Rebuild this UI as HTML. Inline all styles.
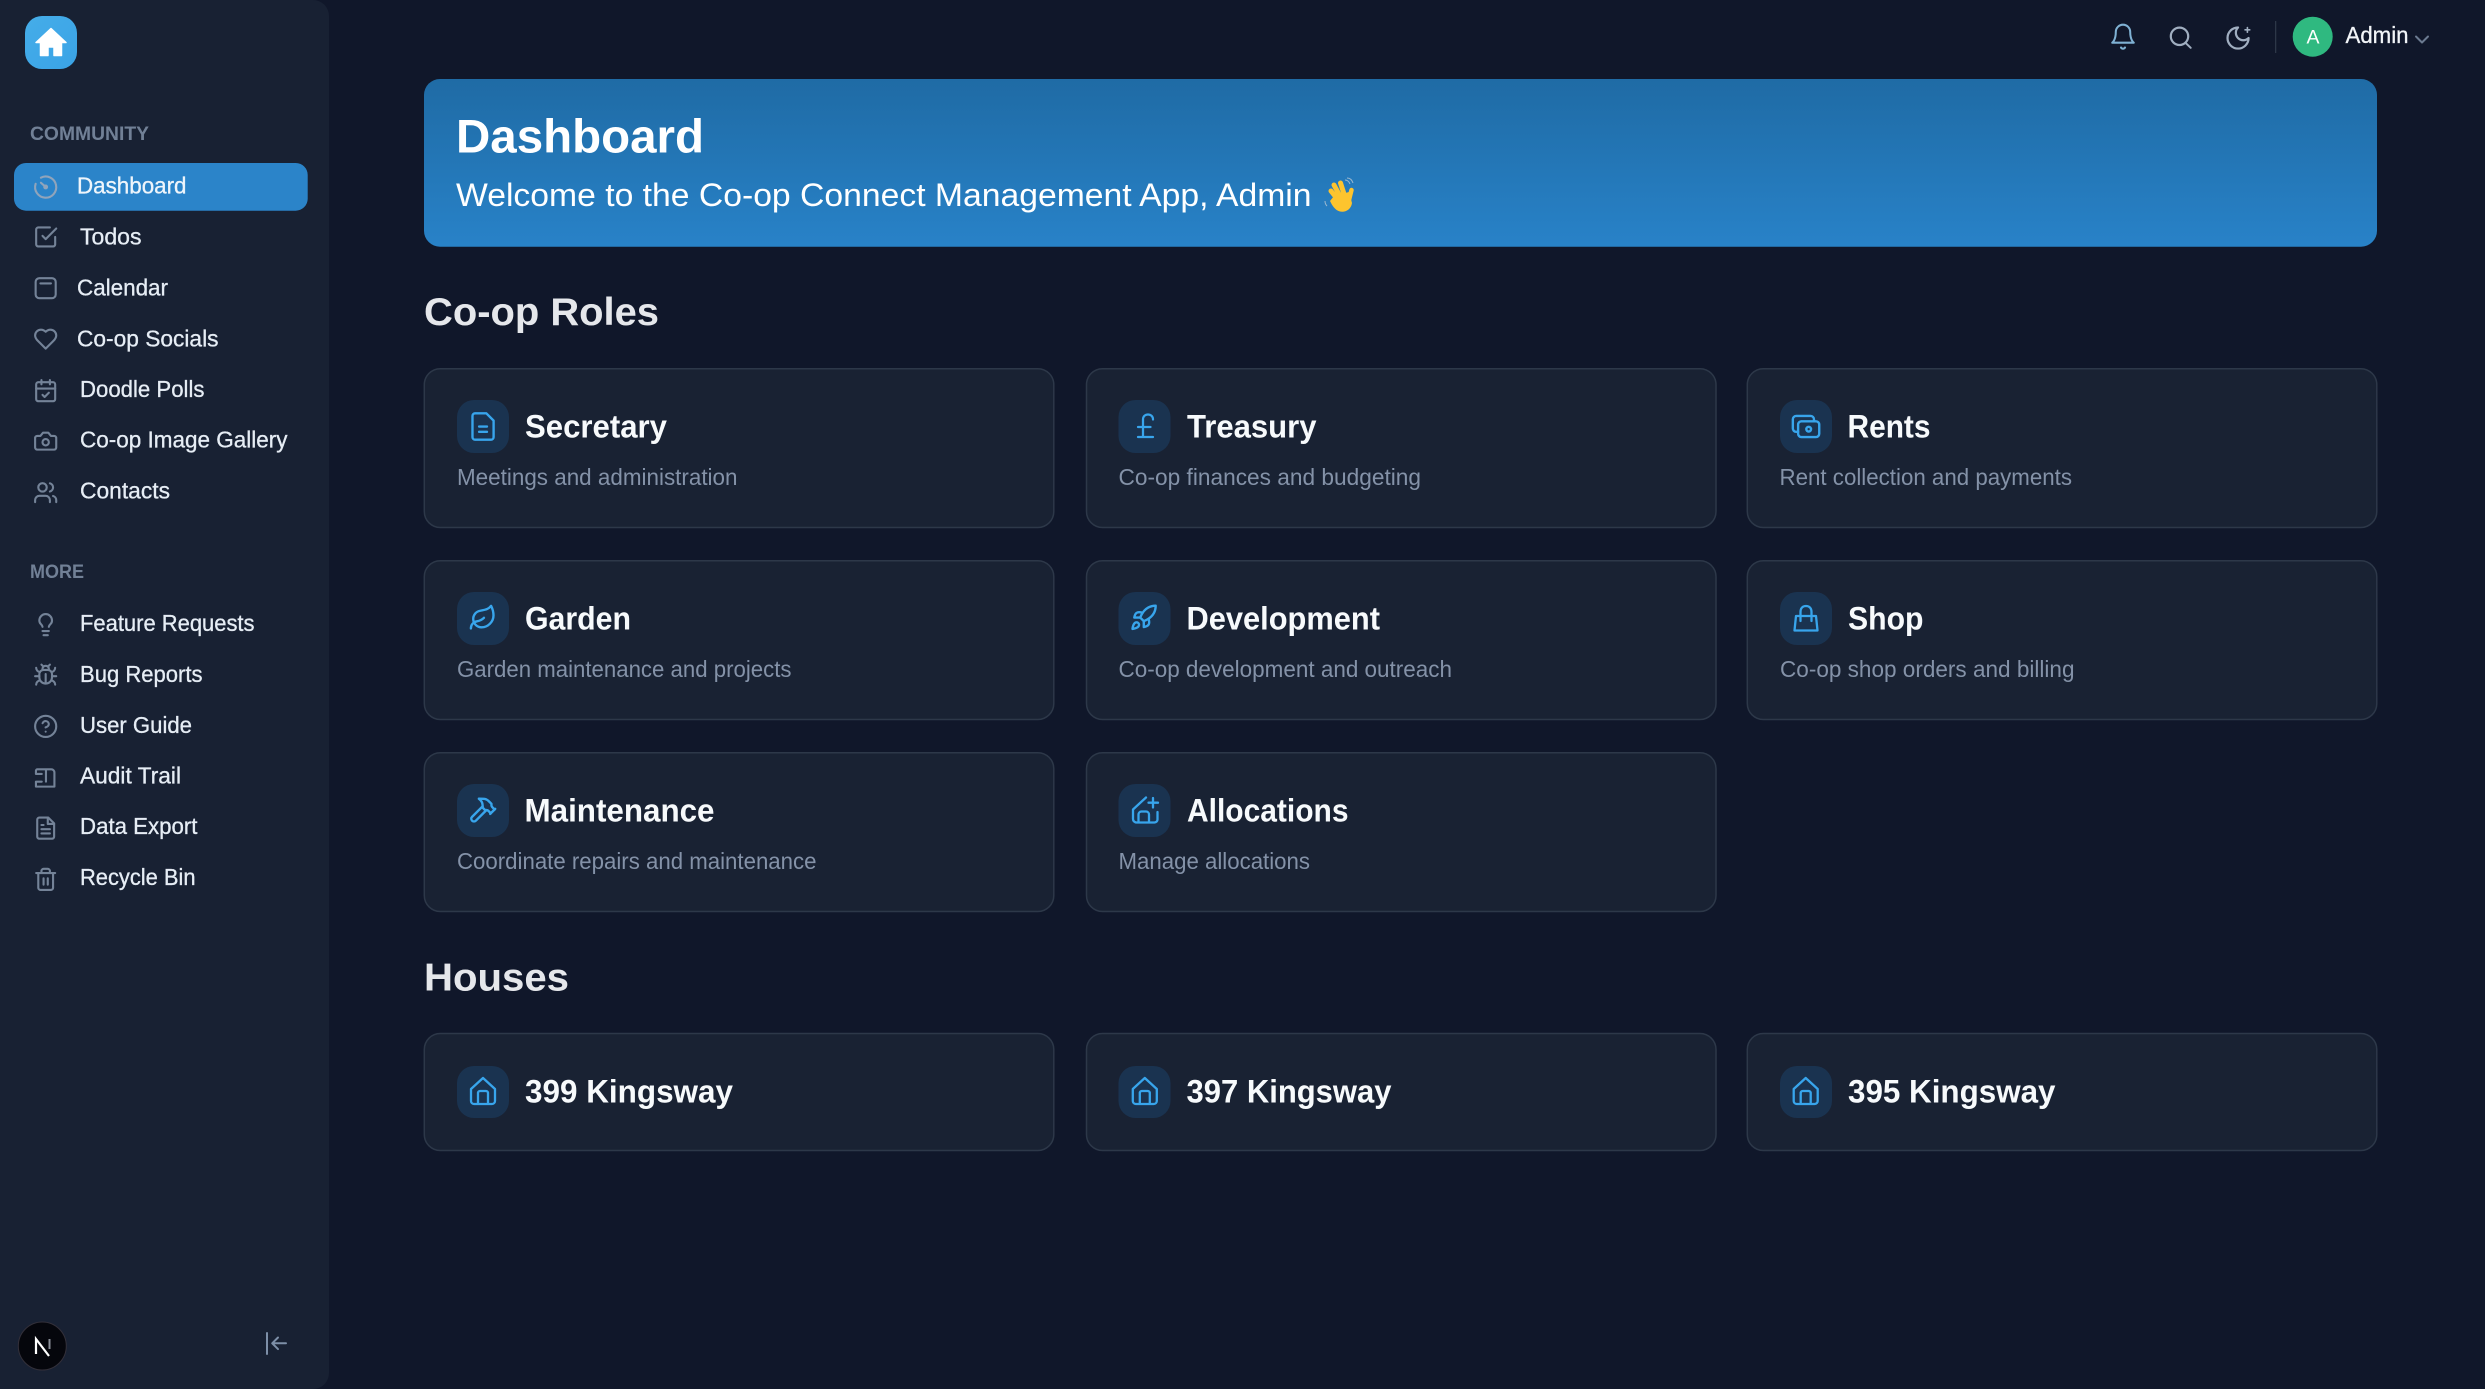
<!DOCTYPE html>
<html lang="en"><head><meta charset="utf-8"><title>Dashboard</title>
<style>
html,body{margin:0;padding:0;background:#10172a;width:2485px;height:1389px;overflow:hidden}
svg{display:block}
text{font-family:"Liberation Sans",Arial,sans-serif}
.n{font-size:23px;fill:#e6edf5;stroke:#e6edf5;stroke-width:.3}
.s{font-size:19px;font-weight:700;fill:#718096}
.t{font-size:32px;font-weight:700;fill:#f7fafc}
.d{font-size:23px;fill:#8492a8}
.h{font-size:39px;font-weight:700;fill:#e5e7eb}
.i{fill:none;stroke:#748398;stroke-width:2;stroke-linecap:round;stroke-linejoin:round}
.c{fill:none;stroke:#38a5ec;stroke-width:1.8;stroke-linecap:round;stroke-linejoin:round}
.card{fill:#192233;stroke:#2d3849;stroke-width:1.5}
.box{fill:#1a3350}
</style></head><body>
<svg xmlns="http://www.w3.org/2000/svg" width="2485" height="1389" viewBox="0 0 2485 1389">
<defs>
<linearGradient id="g" x1="0" y1="0" x2="0" y2="1"><stop offset="0" stop-color="#1f6ba5"/><stop offset="1" stop-color="#2882c8"/></linearGradient>
<linearGradient id="lg" x1="0" y1="0" x2="1" y2="1"><stop offset="0" stop-color="#45ade9"/><stop offset="1" stop-color="#3aa3e6"/></linearGradient>
</defs>
<rect width="2485" height="1389" fill="#10172a"/>

<!-- sidebar -->
<path d="M0 0H313a16 16 0 0 1 16 16V1373a16 16 0 0 1-16 16H0Z" fill="#182133"/>
<rect x="25" y="16" width="52" height="53" rx="17" fill="url(#lg)"/>
<path d="M51 28.500 36 42.500h4.500V55.500h7.500V47h6v8.500h7.500V42.500H66Z" fill="#fff" stroke="#fff" stroke-width="1.500" stroke-linejoin="round"/>

<text class="s" x="30" y="140" textLength="119" lengthAdjust="spacingAndGlyphs">COMMUNITY</text>
<rect x="14" y="163" width="293.700" height="47.700" rx="12" fill="#2b84c9"/>

<text class="n" x="77" y="193.300" textLength="109.500" lengthAdjust="spacingAndGlyphs" style="fill:#eef5fb;stroke:#eef5fb">Dashboard</text>
<text class="n" x="80" y="244.300" textLength="61.500" lengthAdjust="spacingAndGlyphs">Todos</text>
<text class="n" x="77" y="295.500" textLength="91" lengthAdjust="spacingAndGlyphs">Calendar</text>
<text class="n" x="77" y="346.300" textLength="141.500" lengthAdjust="spacingAndGlyphs">Co-op Socials</text>
<text class="n" x="80" y="397" textLength="124.500" lengthAdjust="spacingAndGlyphs">Doodle Polls</text>
<text class="n" x="80" y="447.700" textLength="207.500" lengthAdjust="spacingAndGlyphs">Co-op Image Gallery</text>
<text class="n" x="80" y="498.300" textLength="90" lengthAdjust="spacingAndGlyphs">Contacts</text>

<text class="s" x="30" y="578" textLength="54" lengthAdjust="spacingAndGlyphs">MORE</text>
<text class="n" x="80" y="631" textLength="174.500" lengthAdjust="spacingAndGlyphs">Feature Requests</text>
<text class="n" x="80" y="682" textLength="122.500" lengthAdjust="spacingAndGlyphs">Bug Reports</text>
<text class="n" x="80" y="733" textLength="112" lengthAdjust="spacingAndGlyphs">User Guide</text>
<text class="n" x="80" y="783.300" textLength="101" lengthAdjust="spacingAndGlyphs">Audit Trail</text>
<text class="n" x="80" y="834" textLength="117.500" lengthAdjust="spacingAndGlyphs">Data Export</text>
<text class="n" x="80" y="885" textLength="115.500" lengthAdjust="spacingAndGlyphs">Recycle Bin</text>

<!-- sidebar icons -->
<g transform="translate(33,174.300) scale(1.056)" class="i" style="stroke:#90a4bb"><path d="M7.500 3.200A10 10 0 1 1 2.500 9"/><path d="M12 12 7.500 8"/><circle cx="12" cy="12" r="1.300" fill="#90a4bb"/></g>
<g transform="translate(33,224.300) scale(1.056)" class="i"><path d="m9 11 3 3L22 4"/><path d="M21 12v7a2 2 0 0 1-2 2H5a2 2 0 0 1-2-2V5a2 2 0 0 1 2-2h11"/></g>
<g transform="translate(33,275.500) scale(1.056)" class="i"><rect x="2.500" y="2.500" width="19" height="19" rx="3.500"/><path d="M7 7.500h10"/></g>
<g transform="translate(33,326.500) scale(1.056)" class="i"><path d="M19 14c1.490-1.460 3-3.210 3-5.500A5.500 5.500 0 0 0 16.500 3c-1.760 0-3 .5-4.500 2-1.500-1.500-2.740-2-4.500-2A5.500 5.500 0 0 0 2 8.500c0 2.300 1.500 4.050 3 5.500l7 7Z"/></g>
<g transform="translate(33,378) scale(1.056)" class="i"><path d="M8 2v4M16 2v4"/><rect x="3" y="4" width="18" height="18" rx="2"/><path d="M3 10h18M9 16l2 2 4-4"/></g>
<g transform="translate(33,428.500) scale(1.056)" class="i"><path d="M14.500 4h-5L7 7H4a2 2 0 0 0-2 2v9a2 2 0 0 0 2 2h16a2 2 0 0 0 2-2V9a2 2 0 0 0-2-2h-3l-2.500-3z"/><circle cx="12" cy="13" r="3"/></g>
<g transform="translate(33,480) scale(1.056)" class="i"><path d="M16 21v-2a4 4 0 0 0-4-4H6a4 4 0 0 0-4 4v2"/><circle cx="9" cy="7" r="4"/><path d="M22 21v-2a4 4 0 0 0-3-3.870"/><path d="M16 3.130a4 4 0 0 1 0 7.750"/></g>
<g transform="translate(33,612) scale(1.056)" class="i"><path d="M15 14c.2-1 .7-1.700 1.500-2.500 1-.9 1.500-2.200 1.500-3.500A6 6 0 0 0 6 8c0 1 .2 2.200 1.500 3.500.7.7 1.300 1.500 1.500 2.500"/><path d="M9 18h6M10 22h4"/></g>
<g transform="translate(33,662.500) scale(1.056)" class="i"><path d="m8 2 1.880 1.880M14.120 3.880 16 2M9 7.130v-1a3 3 0 1 1 6 0v1"/><path d="M12 20c-3.300 0-6-2.700-6-6v-3a4 4 0 0 1 4-4h4a4 4 0 0 1 4 4v3c0 3.300-2.700 6-6 6"/><path d="M12 20v-9M6.530 9C4.600 8.800 3 7.100 3 5M6 13H2M3 21c0-2.100 1.700-3.900 3.800-4M20.970 5c0 2.100-1.600 3.800-3.500 4M22 13h-4M17.200 17c2.100.1 3.800 1.900 3.800 4"/></g>
<g transform="translate(33,713.700) scale(1.056)" class="i"><circle cx="12" cy="12" r="10"/><path d="M9.090 9a3 3 0 0 1 5.830 1c0 2-3 3-3 3M12 17h.01"/></g>
<g transform="translate(33.300,765.500) scale(1.056)" class="i"><path d="M2.500 8V5a1.400 1.400 0 0 1 1.400-1.400H17a3 3 0 0 1 3 3V20H2.500v-4.700H8M2.500 8H8M12 3.600v11.700"/></g>
<g transform="translate(33,815.500) scale(1.056)" class="i"><path d="M14.500 2H6a2 2 0 0 0-2 2v16a2 2 0 0 0 2 2h12a2 2 0 0 0 2-2V7.500L14.500 2z"/><path d="M14 2v6h6M16 13H8M16 17H8M10 9H8"/></g>
<g transform="translate(33,866.700) scale(1.056)" class="i"><path d="M3 6h18M19 6v14c0 1-1 2-2 2H7c-1 0-2-1-2-2V6M8 6V4c0-1 1-2 2-2h4c1 0 2 1 2 2v2M10 11v6M14 11v6"/></g>

<!-- bottom of sidebar -->
<circle cx="42.300" cy="1346" r="24" fill="#05060c" stroke="#33303a" stroke-width="1"/>
<path d="M36 1354v-15l13 17" fill="none" stroke="#fff" stroke-width="2.200"/>
<path d="M49.500 1339v10" fill="none" stroke="#8a8f99" stroke-width="2"/>
<path d="M267 1333v21M272.500 1343.300H286M278 1337.500l-5.800 5.800 5.800 5.800" fill="none" stroke="#7d8fa8" stroke-width="2" stroke-linecap="round" stroke-linejoin="round"/>

<!-- top bar -->
<g transform="translate(2108.600,22.300) scale(1.2)" fill="none" stroke="#7fb1d3" stroke-width="1.700" stroke-linecap="round" stroke-linejoin="round"><path d="M6 8a6 6 0 0 1 12 0c0 7 3 9 3 9H3s3-2 3-9"/><path d="M10.300 21a1.940 1.940 0 0 0 3.400 0"/></g>
<circle cx="2179.500" cy="36.300" r="8.700" fill="none" stroke="#a0aec0" stroke-width="2.200"/>
<path d="M2186 43.300l4.700 4.500" stroke="#a0aec0" stroke-width="2" stroke-linecap="round"/>
<g transform="translate(2224,24) scale(1.170)" fill="none" stroke="#a0aec0" stroke-width="1.900" stroke-linecap="round" stroke-linejoin="round"><path d="M12 3a6 6 0 0 0 9 9 9 9 0 1 1-9-9Z"/><path d="M20 3v4M22 5h-4" stroke-width="1.400"/></g>
<rect x="2275" y="21" width="1.300" height="32" fill="#2d3748"/>
<circle cx="2312.700" cy="36.700" r="20" fill="#2fb980"/>
<text x="2306.500" y="43.500" font-size="19" fill="#fff" textLength="13" lengthAdjust="spacingAndGlyphs">A</text>
<text class="n" x="2345.500" y="43" textLength="63" lengthAdjust="spacingAndGlyphs" style="fill:#f2f5f8;stroke:#f2f5f8">Admin</text>
<path d="M2416 36.500l6 6 6-6" fill="none" stroke="#6b7a90" stroke-width="2" stroke-linecap="round" stroke-linejoin="round"/>

<!-- banner -->
<rect x="424" y="79" width="1953" height="167.700" rx="16" fill="url(#g)"/>
<text x="456" y="152.700" font-size="47.500" font-weight="700" fill="#fff" textLength="248" lengthAdjust="spacingAndGlyphs">Dashboard</text>
<text x="456" y="206" font-size="32" fill="#fff" textLength="855.500" lengthAdjust="spacingAndGlyphs">Welcome to the Co-op Connect Management App, Admin</text>
<g stroke="#fdc42e" stroke-width="5" stroke-linecap="round" fill="none">
<path d="M1339 201 1331 191M1341 198 1334 185M1345 197 1340.500 183"/>
<path d="M1349 200 1351.500 190" stroke-width="4.500"/>
</g>
<path d="M1334 196 1349 192 1352 203C1351 210 1345 212.500 1340 211.500 1335 210.500 1332 205 1330 201Z" fill="#fdc42e"/>
<path d="M1345 180c2 0 4 1.500 5 4M1347 178c3 0 5 2 6 5M1325 201c0 2 1 4 2 5" fill="none" stroke="#9db9d0" stroke-width="1"/>

<!-- section heads -->
<text class="h" x="424" y="325" textLength="235" lengthAdjust="spacingAndGlyphs">Co-op Roles</text>
<text class="h" x="424" y="990.700" textLength="145" lengthAdjust="spacingAndGlyphs">Houses</text>

<!-- cards -->
<rect class="card" x="424.300" y="368.700" width="629.500" height="158.800" rx="16"/>
<rect class="card" x="1086.500" y="368.700" width="629.500" height="158.800" rx="16"/>
<rect class="card" x="1747.300" y="368.700" width="629.500" height="158.800" rx="16"/>
<rect class="card" x="424.300" y="560.700" width="629.500" height="158.800" rx="16"/>
<rect class="card" x="1086.500" y="560.700" width="629.500" height="158.800" rx="16"/>
<rect class="card" x="1747.300" y="560.700" width="629.500" height="158.800" rx="16"/>
<rect class="card" x="424.300" y="752.700" width="629.500" height="158.800" rx="16"/>
<rect class="card" x="1086.500" y="752.700" width="629.500" height="158.800" rx="16"/>
<rect class="card" x="424.300" y="1033.500" width="629.500" height="117" rx="16"/>
<rect class="card" x="1086.500" y="1033.500" width="629.500" height="117" rx="16"/>
<rect class="card" x="1747.300" y="1033.500" width="629.500" height="117" rx="16"/>

<rect class="box" x="457" y="400" width="52" height="53" rx="17"/>
<rect class="box" x="1118.500" y="400" width="52" height="53" rx="17"/>
<rect class="box" x="1780" y="400" width="52" height="53" rx="17"/>
<rect class="box" x="457" y="592" width="52" height="53" rx="17"/>
<rect class="box" x="1118.500" y="592" width="52" height="53" rx="17"/>
<rect class="box" x="1780" y="592" width="52" height="53" rx="17"/>
<rect class="box" x="457" y="784" width="52" height="53" rx="17"/>
<rect class="box" x="1118.500" y="784" width="52" height="53" rx="17"/>
<rect class="box" x="457" y="1066" width="52" height="52" rx="17"/>
<rect class="box" x="1118.500" y="1066" width="52" height="52" rx="17"/>
<rect class="box" x="1780" y="1066" width="52" height="52" rx="17"/>

<text class="t" x="525" y="437.300" textLength="142" lengthAdjust="spacingAndGlyphs">Secretary</text>
<text class="t" x="1187" y="437.300" textLength="129.500" lengthAdjust="spacingAndGlyphs">Treasury</text>
<text class="t" x="1847.500" y="437.300" textLength="83" lengthAdjust="spacingAndGlyphs">Rents</text>
<text class="t" x="525" y="629.300" textLength="106" lengthAdjust="spacingAndGlyphs">Garden</text>
<text class="t" x="1186.500" y="629.300" textLength="193.500" lengthAdjust="spacingAndGlyphs">Development</text>
<text class="t" x="1848" y="629.300" textLength="75.500" lengthAdjust="spacingAndGlyphs">Shop</text>
<text class="t" x="524.500" y="821.500" textLength="190" lengthAdjust="spacingAndGlyphs">Maintenance</text>
<text class="t" x="1187" y="821.500" textLength="161.500" lengthAdjust="spacingAndGlyphs">Allocations</text>
<text class="t" x="525" y="1102.700" textLength="208" lengthAdjust="spacingAndGlyphs">399 Kingsway</text>
<text class="t" x="1186.500" y="1102.700" textLength="205" lengthAdjust="spacingAndGlyphs">397 Kingsway</text>
<text class="t" x="1848" y="1102.700" textLength="207.500" lengthAdjust="spacingAndGlyphs">395 Kingsway</text>

<text class="d" x="457" y="485" textLength="280.500" lengthAdjust="spacingAndGlyphs">Meetings and administration</text>
<text class="d" x="1118.500" y="485" textLength="302.500" lengthAdjust="spacingAndGlyphs">Co-op finances and budgeting</text>
<text class="d" x="1779.500" y="485" textLength="292.500" lengthAdjust="spacingAndGlyphs">Rent collection and payments</text>
<text class="d" x="457" y="677" textLength="334.500" lengthAdjust="spacingAndGlyphs">Garden maintenance and projects</text>
<text class="d" x="1118.500" y="677" textLength="333.500" lengthAdjust="spacingAndGlyphs">Co-op development and outreach</text>
<text class="d" x="1780" y="677" textLength="294.500" lengthAdjust="spacingAndGlyphs">Co-op shop orders and billing</text>
<text class="d" x="457" y="869" textLength="359.500" lengthAdjust="spacingAndGlyphs">Coordinate repairs and maintenance</text>
<text class="d" x="1118.500" y="869" textLength="191.500" lengthAdjust="spacingAndGlyphs">Manage allocations</text>

<!-- card icons -->
<g transform="translate(467.200,410.700) scale(1.320)" class="c"><path d="M14.500 2H6a2 2 0 0 0-2 2v16a2 2 0 0 0 2 2h12a2 2 0 0 0 2-2V7.500L14.500 2z"/><path d="M9 12h6M9 16h6"/></g>
<g transform="translate(1130.500,410.700) scale(1.250)" class="c"><path d="M18 7c0-5.333-8-5.333-8 0M10 7v14M6 21h12M6 13h10"/></g>
<g transform="translate(1790.200,410.700) scale(1.320)" class="c"><rect x="6" y="8" width="16" height="12" rx="2.500"/><circle cx="14" cy="14" r="1.800"/><path d="M18 8V6.500A2.500 2.500 0 0 0 15.500 4h-11A2.500 2.500 0 0 0 2 6.500v7A2.500 2.500 0 0 0 4.500 16H6"/></g>
<g transform="translate(468.500,603.500) scale(1.190)" class="c" style="stroke-width:2"><path d="M11 20A7 7 0 0 1 9.800 6.100C15.500 5 17 4.480 19 2c1 2 2 4.180 2 8 0 5.500-4.780 10-10 10Z"/><path d="M2 21c0-3 1.850-5.360 5.080-6C9.500 14.520 12 13 13 12"/></g>
<g transform="translate(1129.500,603.300) scale(1.190)" class="c" style="stroke-width:2"><path d="M4.500 16.500c-1.500 1.260-2 5-2 5s3.740-.5 5-2c.71-.84.7-2.130-.09-2.910a2.180 2.180 0 0 0-2.910-.09z"/><path d="m12 15-3-3a22 22 0 0 1 2-3.950A12.880 12.880 0 0 1 22 2c0 2.720-.78 7.500-6 11a22.350 22.350 0 0 1-4 2z"/><path d="M9 12H4s.55-3.030 2-4c1.620-1.080 5 0 5 0M12 15v5s3.030-.55 4-2c1.080-1.620 0-5 0-5"/></g>
<path class="c" d="M1796 616h20l1.500 14.500h-23ZM1800.500 621v-9c0-4 2.300-6 5.500-6s5.500 2 5.500 6v9" style="stroke-width:2.300"/>
<g transform="translate(467.500,795) scale(1.260)" class="c" style="stroke-width:1.900"><path d="m15 12-8.373 8.373a1 1 0 1 1-3-3L12 9"/><path d="m18 15 4-4"/><path d="m21.500 11.500-1.914-1.914A2 2 0 0 1 19 8.172V7l-2.260-2.260a6 6 0 0 0-4.202-1.756L9 2.960l.92.82A6.180 6.180 0 0 1 12 8.400V10l2 2h1.172a2 2 0 0 1 1.414.586L18.500 14.500"/></g>
<path class="c" d="M1146 797.500 1133 809.500V819a3.500 3.500 0 0 0 3.500 3.500h18a3 3 0 0 0 3-3V812M1138.500 822v-7.500a3 3 0 0 1 3-3h4.500a3 3 0 0 1 3 3V822M1153 798v9.500M1148.500 802.700h9.500" style="stroke-width:2.300"/>
<path class="c" d="M483 1078 471 1089V1101a3 3 0 0 0 3 3h18a3 3 0 0 0 3-3V1089ZM478 1104v-11a2 2 0 0 1 2-2h6a2 2 0 0 1 2 2v11" style="stroke-width:2.300"/>
<path class="c" d="M1144.800 1078 1132.800 1089V1101a3 3 0 0 0 3 3h18a3 3 0 0 0 3-3V1089ZM1139.800 1104v-11a2 2 0 0 1 2-2h6a2 2 0 0 1 2 2v11" style="stroke-width:2.300"/>
<path class="c" d="M1805.700 1078 1793.700 1089V1101a3 3 0 0 0 3 3h18a3 3 0 0 0 3-3V1089ZM1800.700 1104v-11a2 2 0 0 1 2-2h6a2 2 0 0 1 2 2v11" style="stroke-width:2.300"/>
</svg>
</body></html>
